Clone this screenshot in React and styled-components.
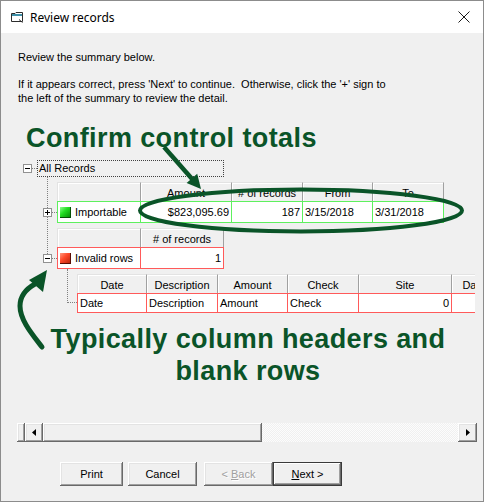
import React from "react";
import styled, { createGlobalStyle, css } from "styled-components";

const Global = createGlobalStyle`
  html, body { margin: 0; padding: 0; background: #fff; }
  body { font-family: "Liberation Sans", Arial, sans-serif; }
  * { box-sizing: border-box; }
`;

const GREEN = "#0a5428";
const TONES = { green: "#5ef05e", red: "#ff5a5a" };

const raised = css`
  background: #f0f0f0;
  box-shadow: inset -1px -1px #696969, inset 1px 1px #fff, inset -2px -2px #a0a0a0, inset 2px 2px #e3e3e3;
`;

const Window = styled.div`
  position: relative;
  width: 484px;
  height: 502px;
  border: 1px solid #8c8c8c;
  background: #f0f0f0;
  display: flex;
  flex-direction: column;
  overflow: hidden;
  font-size: 11px;
  color: #000;
`;

const TitleBar = styled.div`
  height: 32px;
  flex-shrink: 0;
  background: #fff;
  display: flex;
  align-items: center;
  padding-left: 10px;
`;

const TitleText = styled.span`
  margin-left: 7px;
  font-family: "Noto Sans", "Liberation Sans", sans-serif;
  font-size: 12px;
  color: #000;
`;

const CloseButton = styled.div`
  margin-left: auto;
  width: 38px;
  height: 32px;
  display: flex;
  align-items: center;
  justify-content: center;
`;

const Body = styled.div`
  flex: 1;
  display: flex;
  flex-direction: column;
`;

const Intro = styled.div`
  padding: 17px 0 0 17px;
  line-height: 14px;
`;

const Para = styled.p`
  margin: ${(p) => p.$gap || 0}px 0 0;
  white-space: pre;
`;

const TreeView = styled.div`
  margin-top: 55px;
  height: 263px;
  width: 474px;
  overflow: hidden;
  padding-left: 22px;
`;

const NodeRow = styled.div`
  display: flex;
  align-items: ${(p) => p.$align || "center"};
`;

const Expander = styled.div`
  width: 9px;
  height: 9px;
  flex-shrink: 0;
  border: 1px solid #919191;
  background: #fff;
  position: relative;
  &::before {
    content: "";
    position: absolute;
    left: 1px;
    right: 1px;
    top: 3px;
    height: 1px;
    background: #000;
  }
  ${(p) =>
    p.$plus &&
    css`
      &::after {
        content: "";
        position: absolute;
        top: 1px;
        bottom: 1px;
        left: 3px;
        width: 1px;
        background: #000;
      }
    `}
`;

const HLine = styled.div`
  width: ${(p) => p.$w}px;
  height: 0;
  border-top: 1px dotted #808080;
`;

const ExpanderGroup = styled.div`
  display: flex;
  align-items: center;
  margin-bottom: 6px;
  position: relative;
  z-index: 1;
`;

const RootLabel = styled.div`
  width: 187px;
  height: 17px;
  border: 1px dotted #404040;
  padding-left: 1px;
  line-height: 15px;
`;

const Children = styled.div`
  position: relative;
  margin-left: 20px;
  padding-top: 5px;
  display: flex;
  flex-direction: column;
  gap: 5px;
  &::before {
    content: "";
    position: absolute;
    left: 4px;
    top: 0;
    height: ${(p) => p.$line}px;
    border-left: 1px dotted #808080;
  }
`;

const NodeBlock = styled.div`
  display: flex;
  flex-direction: column;
`;

const SubNodes = styled.div`
  display: flex;
  margin-left: 24px;
`;

const Elbow = styled.div`
  width: 10px;
  height: 34px;
  flex-shrink: 0;
  border-left: 1px dotted #808080;
  border-bottom: 1px dotted #808080;
`;

const SubGridWrap = styled.div`
  margin-top: 5px;
  flex-shrink: 0;
`;

const Grid = styled.div`
  display: grid;
  grid-template-columns: ${(p) => p.$cols};
  grid-template-rows: 19px ${(p) => p.$row || 22}px;
  flex-shrink: 0;
`;

const HeadCell = styled.div`
  background: #f0f0f0;
  border-top: 1px solid #e3e3e3;
  border-right: 1px solid #a0a0a0;
  ${(p) => p.$first && "border-left: 1px solid #e3e3e3;"}
  box-shadow: inset 1px 1px 0 #fff;
  display: flex;
  align-items: center;
  justify-content: center;
  white-space: nowrap;
  overflow: hidden;
  padding-top: 1px;
`;

const DataCell = styled.div`
  background: #fff;
  border-top: 1px solid ${(p) => TONES[p.$tone]};
  border-bottom: 1px solid ${(p) => TONES[p.$tone]};
  border-right: 1px solid ${(p) => TONES[p.$tone]};
  ${(p) => p.$first && `border-left: 1px solid ${TONES[p.$tone]};`}
  display: flex;
  align-items: center;
  justify-content: ${(p) => (p.$right ? "flex-end" : "flex-start")};
  gap: 4px;
  padding: 0 2px 0 2px;
  white-space: nowrap;
  overflow: hidden;
`;

const StatusIcon = styled.span`
  width: 11px;
  height: 11px;
  flex-shrink: 0;
  background: ${(p) =>
    p.$tone === "green"
      ? "linear-gradient(135deg, #8dff8d 0%, #22dd22 40%, #0a9a0a 85%, #045a04 100%)"
      : "linear-gradient(135deg, #ff9a80 0%, #ff4a2a 40%, #c42a10 85%, #6a1004 100%)"};
  box-shadow: inset -1px -1px ${(p) => (p.$tone === "green" ? "#045004" : "#5a0c02")};
`;

const HScroll = styled.div`
  margin: 0 6px 0 16px;
  height: 19px;
  display: flex;
`;

const ScrollPart = styled.div`
  ${raised};
  width: ${(p) => p.$w}px;
  flex-shrink: 0;
  display: flex;
  align-items: center;
  justify-content: center;
`;

const Track = styled.div`
  flex: 1;
  background-color: #f0f0f0;
  background-image: repeating-conic-gradient(#fcfcfc 0 25%, #f0f0f0 0 50%);
  background-size: 2px 2px;
`;

const ButtonRow = styled.div`
  margin-top: 20px;
  padding-left: 59px;
  display: flex;
`;

const Button = styled.button`
  width: ${(p) => p.$w}px;
  height: 24px;
  margin: 0 0 0 ${(p) => p.$ml || 0}px;
  padding: 0;
  border: none;
  font: 11px "Liberation Sans", Arial, sans-serif;
  ${raised};
  color: ${(p) => (p.disabled ? "#a0a0a0" : "#000")};
  ${(p) => p.disabled && "text-shadow: 1px 1px 0 #fff;"}
  ${(p) =>
    p.$default &&
    css`
      box-shadow: inset 0 0 0 1px #3a3a3a, inset -2px -2px #696969, inset 2px 2px #fff, inset -3px -3px #a0a0a0;
    `}
`;

const Key = styled.span`
  text-decoration: underline;
`;

const Overlay = styled.svg`
  position: absolute;
  left: 0;
  top: 0;
  width: 482px;
  height: 500px;
  pointer-events: none;
`;

const Callout = styled.div`
  position: absolute;
  left: ${(p) => p.$x}px;
  top: ${(p) => p.$y}px;
  width: ${(p) => p.$w}px;
  text-align: ${(p) => p.$align || "left"};
  font: bold 27px/32px "Liberation Sans", Arial, sans-serif;
  letter-spacing: 0.4px;
  color: ${GREEN};
  white-space: nowrap;
  pointer-events: none;
`;

const Tri = ({ dir }) => (
  <svg width="4" height="7" viewBox="0 0 4 7">
    {dir === "left" ? <path d="M4 0 L0 3.5 L4 7 Z" fill="#000" /> : <path d="M0 0 L4 3.5 L0 7 Z" fill="#000" />}
  </svg>
);

const head = (cols) =>
  cols.map((c, i) => (
    <HeadCell key={"h" + i} $first={i === 0}>
      {c}
    </HeadCell>
  ));

export default function App() {
  return (
    <>
      <Global />
      <Window>
        <TitleBar>
          <svg width="12" height="11" viewBox="0 0 12 11">
            <path d="M0.5 1.5 H4 L5 0.5 H11.5 V9.5 H0.5 Z" fill="#fff" stroke="#2d2d2d" />
            <rect x="1" y="2" width="10" height="2" fill="#3d8fa8" />
            <path d="M8 7.5 L11.5 10.5" stroke="#2d2d2d" />
          </svg>
          <TitleText>Review records</TitleText>
          <CloseButton>
            <svg width="12" height="12" viewBox="0 0 12 12">
              <path d="M0.5 0.5 L11.5 11.5 M11.5 0.5 L0.5 11.5" stroke="#1a1a1a" strokeWidth="1" />
            </svg>
          </CloseButton>
        </TitleBar>
        <Body>
          <Intro>
            <Para>Review the summary below.</Para>
            <Para $gap={13}>
              {"If it appears correct, press 'Next' to continue.  Otherwise, click the '+' sign to"}
              <br />
              {"the left of the summary to review the detail."}
            </Para>
          </Intro>
          <TreeView>
            <NodeRow>
              <Expander />
              <HLine $w={5} />
              <RootLabel>All Records</RootLabel>
            </NodeRow>
            <Children $line={79}>
              <NodeRow $align="flex-end">
                <ExpanderGroup>
                  <Expander $plus />
                  <HLine $w={5} />
                </ExpanderGroup>
                <Grid $cols="84px 91px 71px 70px 71px">
                  {head(["", "Amount", "# of records", "From", "To"])}
                  <DataCell $tone="green" $first>
                    <StatusIcon $tone="green" />
                    Importable
                  </DataCell>
                  <DataCell $tone="green" $right>$823,095.69</DataCell>
                  <DataCell $tone="green" $right>187</DataCell>
                  <DataCell $tone="green">3/15/2018</DataCell>
                  <DataCell $tone="green">3/31/2018</DataCell>
                </Grid>
              </NodeRow>
              <NodeBlock>
                <NodeRow $align="flex-end">
                  <ExpanderGroup>
                    <Expander />
                    <HLine $w={5} />
                  </ExpanderGroup>
                  <Grid $cols="84px 83px">
                    {head(["", "# of records"])}
                    <DataCell $tone="red" $first>
                      <StatusIcon $tone="red" />
                      Invalid rows
                    </DataCell>
                    <DataCell $tone="red" $right>1</DataCell>
                  </Grid>
                </NodeRow>
                <SubNodes>
                  <Elbow />
                  <SubGridWrap>
                    <Grid $cols="70px 71px 70px 71px 93px 45px" $row={20}>
                      {head(["Date", "Description", "Amount", "Check", "Site", "Date"])}
                      <DataCell $tone="red" $first>Date</DataCell>
                      <DataCell $tone="red">Description</DataCell>
                      <DataCell $tone="red">Amount</DataCell>
                      <DataCell $tone="red">Check</DataCell>
                      <DataCell $tone="red" $right>0</DataCell>
                      <DataCell $tone="red"></DataCell>
                    </Grid>
                  </SubGridWrap>
                </SubNodes>
              </NodeBlock>
            </Children>
          </TreeView>
          <HScroll>
            <ScrollPart $w={8} />
            <ScrollPart $w={18}>
              <Tri dir="left" />
            </ScrollPart>
            <ScrollPart $w={219} />
            <Track />
            <ScrollPart $w={19}>
              <Tri dir="right" />
            </ScrollPart>
          </HScroll>
          <ButtonRow>
            <Button $w={63}>Print</Button>
            <Button $w={69} $ml={5}>Cancel</Button>
            <Button $w={69} $ml={7} disabled>
              {"< "}
              <Key>B</Key>
              {"ack"}
            </Button>
            <Button $w={69} $default>
              <Key>N</Key>
              {"ext >"}
            </Button>
          </ButtonRow>
        </Body>

        <Overlay viewBox="1 1 482 500">
          <ellipse cx="301" cy="210.5" rx="161" ry="21" fill="none" stroke={GREEN} strokeWidth="4" />
          <line x1="164" y1="147" x2="193" y2="180" stroke={GREEN} strokeWidth="4.5" />
          <polygon points="201,189 186.6,183 197.2,173.8" fill={GREEN} />
          <path
            d="M 42 347 C 32 334, 20 320, 20 306 C 20 296, 26 289, 35 284"
            fill="none"
            stroke={GREEN}
            strokeWidth="5"
            strokeLinecap="round"
          />
          <polygon points="47,270 29,280 43,292" fill={GREEN} />
        </Overlay>
        <Callout $x={25} $y={121}>Confirm control totals</Callout>
        <Callout $x={27} $y={322} $w={440} $align="center">
          Typically column headers and
          <br />
          blank rows
        </Callout>
      </Window>
    </>
  );
}
